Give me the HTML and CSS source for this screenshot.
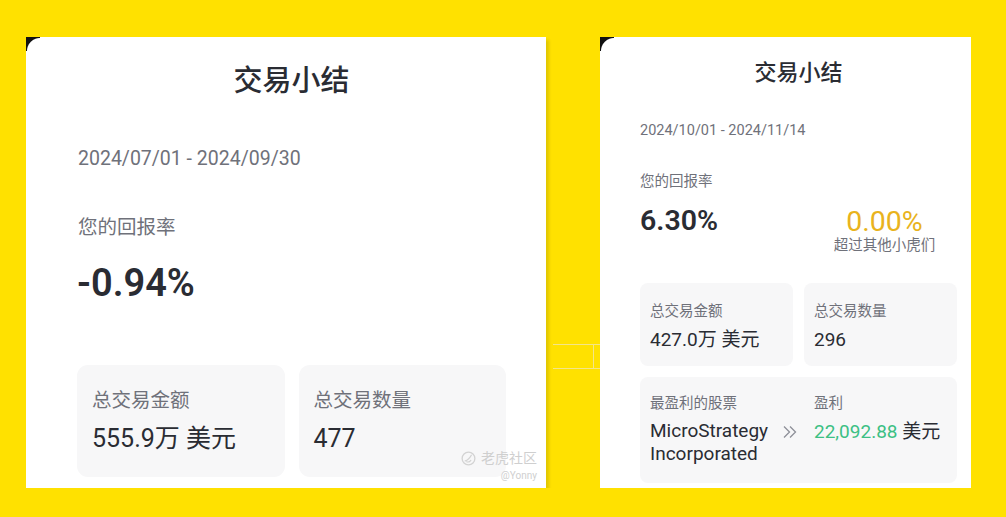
FILE: index.html
```html
<!DOCTYPE html>
<html lang="zh-CN">
<head>
<meta charset="UTF-8">
<meta name="viewport" content="width=device-width, initial-scale=1.0">
<link rel="stylesheet" href="styles.css">
</head>
<body>
<div class="stage">

    <!-- left screenshot: Q3 summary -->
    <section class="card big">
        <h1 class="title">交易小结</h1>
        <div class="date">2024/07/01 - 2024/09/30</div>
        <div class="label">您的回报率</div>
        <div class="rate">-0.94%</div>
        <div class="boxes">
            <div class="box">
                <div class="box-label">总交易金额</div>
                <div class="box-value">555.9万 美元</div>
            </div>
            <div class="box">
                <div class="box-label">总交易数量</div>
                <div class="box-value">477</div>
            </div>
        </div>
        <div class="mark">
            <div class="mark-row">
                <svg width="15" height="15" viewBox="0 0 16 16"><circle cx="8" cy="8" r="6.8" fill="none" stroke="#d3d3d3" stroke-width="1.4"/><path d="M4.5 10.5c2-0.5 4.5-2.5 6.5-6" fill="none" stroke="#d3d3d3" stroke-width="1.4" stroke-linecap="round"/><path d="M6 11.5c1.5 0.5 3.5 0 4.5-1.5" fill="none" stroke="#d3d3d3" stroke-width="1.2" stroke-linecap="round"/></svg>
                <span>老虎社区</span>
            </div>
            <div class="mark-user">@Yonny</div>
        </div>
    </section>

    <div class="gap">
        <div class="seam"></div>
    </div>

    <!-- right screenshot: Q4 to date -->
    <section class="card small">
        <h1 class="title">交易小结</h1>
        <div class="date">2024/10/01 - 2024/11/14</div>
        <div class="rates">
            <div>
                <div class="label">您的回报率</div>
                <div class="rate">6.30%</div>
            </div>
            <div class="beat">
                <div class="beat-num">0.00%</div>
                <div class="beat-text">超过其他小虎们</div>
            </div>
        </div>
        <div class="boxes">
            <div class="box">
                <div class="box-label">总交易金额</div>
                <div class="box-value">427.0万 美元</div>
            </div>
            <div class="box">
                <div class="box-label">总交易数量</div>
                <div class="box-value">296</div>
            </div>
        </div>
        <div class="box wide">
            <div class="col">
                <div class="box-label">最盈利的股票</div>
                <div class="stock">
                    <div class="box-value name">MicroStrategy<br>Incorporated</div>
                    <svg class="chev" width="16" height="14" viewBox="0 0 16 14"><path d="M2 1.5l5.5 5.5-5.5 5.5M8 1.5l5.5 5.5-5.5 5.5" fill="none" stroke="#8e9099" stroke-width="1.3"/></svg>
                </div>
            </div>
            <div class="col">
                <div class="box-label">盈利</div>
                <div class="box-value"><span class="green">22,092.88</span> 美元</div>
            </div>
        </div>
    </section>

</div>
</body>
</html>
```
FILE: styles.css
```css
* {
    box-sizing: border-box;
}
body {
    margin: 0;
    background-color: #ffe100;
    font-family: Roboto, "Noto Sans CJK SC", sans-serif;
    color: #2a2c33;
}
.stage {
    display: flex;
    padding: 37px 0 0 26px;
}

/* both cards share the same parts, only the scale differs */
.card {
    position: relative;
    background-color: #fff;
    height: 451px;
}
.card::before {
    content: "";
    position: absolute;
    top: 0;
    left: 0;
    width: 14px;
    height: 14px;
    background: radial-gradient(circle at 100% 100%, #fff 12.5px, #111 13.5px);
}
.title {
    margin: 0;
    text-align: center;
    font-weight: 500;
}
.date, .label, .box-label, .beat-text {
    color: #6f717a;
}
.rate {
    font-weight: 600;
}
.boxes {
    display: grid;
    grid-template-columns: 1fr 1fr;
}
.box {
    background-color: #f7f7f8;
}

/* left one */
.big {
    width: 520px;
    padding: 24px 40px 0 51px;
    box-shadow: 3px 3px 3px rgba(0, 0, 0, 0.12);
}
.big .title {
    font-size: 29px;
    line-height: 40px;
}
.big .date {
    margin-top: 44px;
    margin-left: 1px;
    font-size: 19.5px;
    line-height: 28px;
}
.big .label {
    margin-top: 41px;
    margin-left: 1px;
    font-size: 19.5px;
    line-height: 28px;
}
.big .rate {
    margin-top: 17px;
    font-size: 38px;
    line-height: 48px;
}
.big .boxes {
    margin-top: 58px;
    gap: 14px;
}
.big .box {
    height: 112px;
    padding: 22px 15px 0;
    border-radius: 11px;
}
.big .box-label {
    font-size: 19.5px;
    line-height: 28px;
}
.big .box-value {
    margin-top: 7px;
    font-size: 25px;
    line-height: 34px;
}

.mark {
    position: absolute;
    right: 9px;
    bottom: 6px;
    color: #cfcfcf;
    text-align: right;
}
.mark-row {
    display: flex;
    align-items: center;
    gap: 5px;
    font-size: 14px;
    line-height: 18px;
}
.mark-user {
    margin-top: 3px;
    font-size: 10px;
    line-height: 12px;
}

/* strip between the two screenshots */
.gap {
    width: 54px;
    padding: 307px 0 0 7px;
}
.seam {
    height: 25px;
    border-top: 1px solid #f3e58a;
    border-bottom: 1px solid #f3e58a;
    background: linear-gradient(#f3e58a, #f3e58a) 40px 0 / 1px 100% no-repeat;
}

/* right one */
.small {
    width: 371px;
    padding: 21px 14px 0 40px;
}
.small .title {
    font-size: 22px;
    line-height: 30px;
}
.small .date {
    margin-top: 33px;
    font-size: 14.5px;
    line-height: 20px;
}
.rates {
    display: grid;
    grid-template-columns: 1fr 1fr;
    gap: 11px;
    margin-top: 31px;
}
.small .label {
    font-size: 14.5px;
    line-height: 20px;
}
.small .rate {
    margin-top: 12px;
    font-size: 28.5px;
    line-height: 34px;
}
.beat {
    padding: 35px 0 0 8px;
    text-align: center;
}
.beat-num {
    color: #e9b31d;
    font-size: 28.5px;
    line-height: 30px;
}
.beat-text {
    font-size: 14.5px;
    line-height: 18px;
}
.small .boxes {
    margin-top: 28px;
    gap: 11px;
}
.small .box {
    height: 83px;
    padding: 19px 10px 0;
    border-radius: 8px;
}
.small .box-label {
    font-size: 14.5px;
    line-height: 20px;
}
.small .box-value {
    margin-top: 5px;
    font-size: 19px;
    line-height: 26px;
}
.small .wide {
    display: grid;
    grid-template-columns: 1fr 1fr;
    gap: 11px;
    height: 106px;
    margin-top: 11px;
    padding: 17px 0 0;
}
.col {
    padding-left: 10px;
}
.stock {
    display: flex;
    justify-content: space-between;
    align-items: flex-start;
    margin-right: -5px;
}
.small .name {
    line-height: 23px;
}
.chev {
    margin-top: 11px;
}
.green {
    color: #3cc084;
}
```
